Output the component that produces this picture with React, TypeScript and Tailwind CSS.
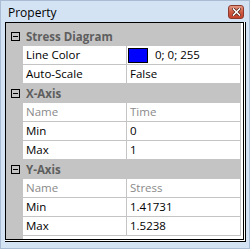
const font = { fontFamily: '"Open Sans", "Noto Sans", sans-serif' };

type Row =
  | { kind: "cat"; label: string }
  | { kind: "prop"; name: string; value: string; readOnly?: boolean; swatch?: string };

const rows: Row[] = [
  { kind: "cat", label: "Stress Diagram" },
  { kind: "prop", name: "Line Color", value: "0; 0; 255", swatch: "#0000ff" },
  { kind: "prop", name: "Auto-Scale", value: "False" },
  { kind: "cat", label: "X-Axis" },
  { kind: "prop", name: "Name", value: "Time", readOnly: true },
  { kind: "prop", name: "Min", value: "0" },
  { kind: "prop", name: "Max", value: "1" },
  { kind: "cat", label: "Y-Axis" },
  { kind: "prop", name: "Name", value: "Stress", readOnly: true },
  { kind: "prop", name: "Min", value: "1.41731" },
  { kind: "prop", name: "Max", value: "1.5238" },
];

const MinusBox = () => (
  <div className="w-[9px] h-[9px] border border-black bg-[#c4c4c4] flex items-center justify-center">
    <div className="w-[5px] h-px bg-black" />
  </div>
);

const CloseButton = () => (
  <div className="w-[16px] h-[14px] rounded-[3px] border border-[#8c3a2e] bg-gradient-to-b from-[#e29a87] via-[#cf5a43] to-[#c3402b] flex items-center justify-center">
    <svg width="9" height="8" viewBox="0 0 9 8">
      <path d="M1.5 1 L7.5 7 M7.5 1 L1.5 7" stroke="#4a1a12" strokeWidth="3" strokeLinecap="square" />
      <path d="M1.5 1 L7.5 7 M7.5 1 L1.5 7" stroke="#ffffff" strokeWidth="1.6" strokeLinecap="square" />
    </svg>
  </div>
);

export default function App() {
  return (
    <div
      className="w-[250px] h-[249px] bg-[#d4e3f4] border border-[#a9bcd4] flex flex-col text-[11.5px] leading-none"
      style={font}
    >
      <div className="h-[20px] flex items-start justify-between pl-[7px] pr-[5px] pt-[4px]">
        <span className="text-black text-[12px] mt-[2px]">Property</span>
        <CloseButton />
      </div>

      <div className="ml-[4px] mt-px w-[241px] h-[220px] border-r border-b border-black bg-white pr-px pb-px">
        <div className="w-full h-full border border-black bg-white flex flex-col">
          <div className="flex-1 flex bg-white">
            <div className="flex-1 flex flex-col">
              <div className="h-[4px] bg-[#c4c4c4] mr-[2px]" />
              {rows.map((r, i) =>
                r.kind === "cat" ? (
                  <div key={i} className="h-[19px] bg-[#c4c4c4] mr-[2px] flex items-center">
                    <div className="w-[17px] flex justify-center pl-[1px]">
                      <MinusBox />
                    </div>
                    <span className="pl-[3px] font-bold text-[#5e5e5e]">{r.label}</span>
                  </div>
                ) : (
                  <div key={i} className="h-[19px] flex">
                    <div className="w-[17px] bg-[#c4c4c4]" />
                    <div className="w-[104px] border-r border-b border-[#c4c4c4] flex items-center pl-[3px]">
                      <span className={r.readOnly ? "text-[#8a8a8a]" : "text-black"}>{r.name}</span>
                    </div>
                    <div className="w-[114px] border-r border-b border-[#c4c4c4] flex items-center">
                      {r.swatch ? (
                        <>
                          <div
                            className="ml-px w-[20px] h-[15px] border border-black"
                            style={{ backgroundColor: r.swatch }}
                          />
                          <span className="pl-[7px] text-black">{r.value}</span>
                        </>
                      ) : (
                        <span className={`pl-[3px] ${r.readOnly ? "text-[#8a8a8a]" : "text-black"}`}>
                          {r.value}
                        </span>
                      )}
                    </div>
                  </div>
                )
              )}
              <div className="flex-1 flex">
                <div className="w-[17px] bg-[#c4c4c4]" />
              </div>
            </div>
          </div>
        </div>
      </div>
    </div>
  );
}
